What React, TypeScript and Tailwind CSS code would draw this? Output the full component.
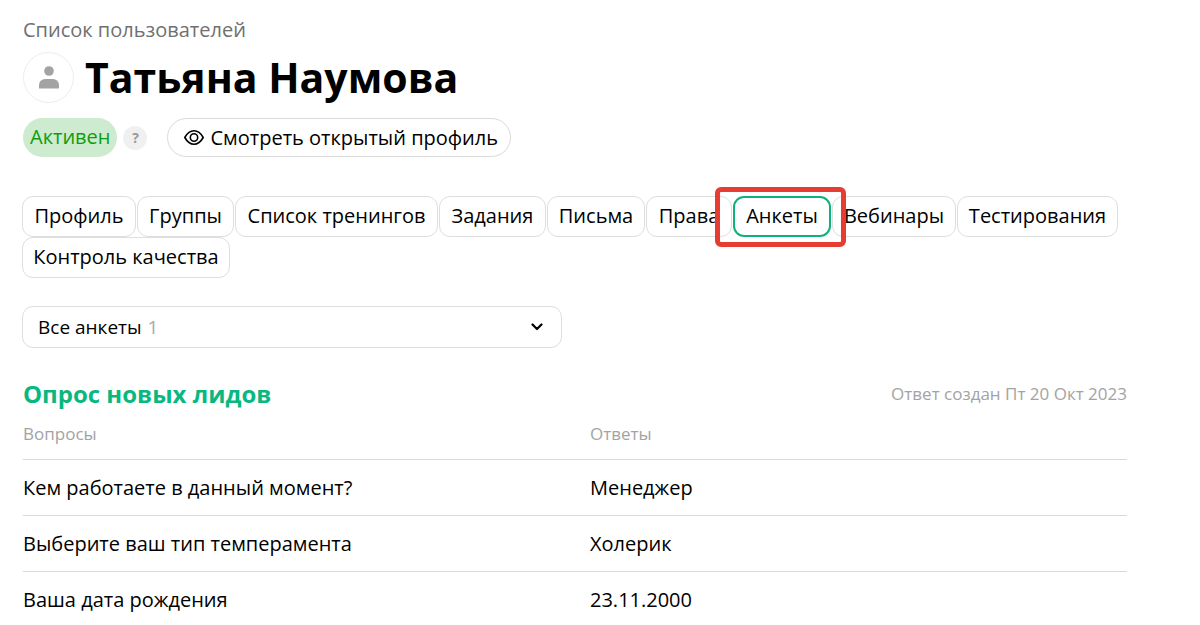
import { useState } from "react";
import clsx from "clsx";

const tabs = [
  { id: "profile", label: "Профиль", width: "min-w-[114px]" },
  { id: "groups", label: "Группы", width: "min-w-[97px]" },
  { id: "trainings", label: "Список тренингов", width: "min-w-[203px]" },
  { id: "tasks", label: "Задания", width: "min-w-[107px]" },
  { id: "letters", label: "Письма", width: "min-w-[98px]" },
  { id: "rights", label: "Права", width: "min-w-[86px]" },
  { id: "surveys", label: "Анкеты", width: "min-w-[98px]" },
  { id: "webinars", label: "Вебинары", width: "min-w-[124px]" },
  { id: "testing", label: "Тестирования", width: "min-w-[161px]" },
  { id: "quality", label: "Контроль качества", width: "min-w-[208px]" },
];

const answers = [
  { question: "Кем работаете в данный момент?", answer: "Менеджер" },
  { question: "Выберите ваш тип темперамента", answer: "Холерик" },
  { question: "Ваша дата рождения", answer: "23.11.2000" },
];

const UserIcon = () => (
  <svg viewBox="0 0 20 23" className="h-[23px] w-5" fill="#a3a3a3" aria-hidden="true">
    <circle cx="10" cy="5" r="4.8" />
    <path d="M0 22.500V19a6 6 0 0 1 6-6h8a6 6 0 0 1 6 6v3.500z" />
  </svg>
);

const EyeIcon = () => (
  <svg viewBox="0 0 20 15" className="mb-0.5 h-[15px] w-5" fill="none" stroke="#000" strokeWidth="1.6" aria-hidden="true">
    <path d="M.8 7.500C3.200 3.200 6.300 .8 10 .8s6.800 2.400 9.200 6.700c-2.400 4.300-5.500 6.700-9.200 6.700S3.200 11.800 .8 7.500z" strokeLinejoin="round" />
    <circle cx="10" cy="7.500" r="3.700" />
  </svg>
);

const ChevronIcon = () => (
  <svg viewBox="0 0 12 8" className="h-2 w-3" fill="none" stroke="#000" strokeWidth="2.2" strokeLinecap="round" strokeLinejoin="round" aria-hidden="true">
    <path d="M1.500 1.500 6 6l4.500-4.500" />
  </svg>
);

export default function App() {
  const [activeTab, setActiveTab] = useState("surveys");

  return (
    <main className="bg-white pb-3 pl-[23px] pr-[73px] pt-4 font-['Open_Sans','Noto_Sans',sans-serif] text-xl leading-7 text-black">
      <a href="#users" className="block text-[#707070]">Список пользователей</a>

      <header className="mt-2 flex items-center gap-[11px]">
        <span className="flex size-[51px] shrink-0 items-center justify-center rounded-full border border-[#ededed]">
          <UserIcon />
        </span>
        <h1 className="text-[41px] font-bold leading-[49px]">Татьяна Наумова</h1>
      </header>

      <div className="mt-[15px] flex items-center">
        <span className="rounded-full bg-[#cdebce] px-[7px] pb-1.5 pt-[5px] text-[#109c10]">Активен</span>
        <button type="button" aria-label="Справка" className="ml-1.5 size-6 rounded-full bg-[#f0f0f0] text-sm font-bold leading-6 text-[#999]">
          ?
        </button>
        <a href="#open-profile" className="ml-5 flex items-center gap-1.5 rounded-full border border-[#dadada] pb-1 pl-4 pr-3 pt-[5px]">
          <EyeIcon />
          Смотреть открытый профиль
        </a>
      </div>

      <nav aria-label="Разделы пользователя" className="-ml-px mt-[39px] flex flex-wrap gap-x-px">
        {tabs.map((tab) => (
          <div key={tab.id} className="relative">
            <button
              type="button"
              aria-current={activeTab === tab.id ? "page" : undefined}
              onClick={() => setActiveTab(tab.id)}
              className={clsx(
                "block h-[41px] rounded-[11px] pb-px text-center",
                tab.width,
                activeTab === tab.id ? "border-2 border-[#0eb27e]" : "border border-[#dedede]",
              )}
            >
              {tab.label}
            </button>
            {tab.id === "surveys" && (
              <span className="pointer-events-none absolute -bottom-2.5 -left-[18px] -right-[15px] -top-[9px] z-10 rounded-md border-5 border-[#e63c31]" />
            )}
          </div>
        ))}
      </nav>

      <label className="-ml-px mt-7 flex h-[42px] w-full max-w-[540px] items-center gap-1.5 rounded-[11px] border border-[#dedede] pl-[15px] pr-[18px] text-[19px]">
        <select aria-label="Анкеты" className="appearance-none bg-transparent outline-none [field-sizing:content]">
          <option>Все анкеты</option>
        </select>
        <span className="text-[#a8a8a8]">1</span>
        <span className="ml-auto">
          <ChevronIcon />
        </span>
      </label>

      <section className="mt-[31px]">
        <div className="flex items-center justify-between">
          <h2 className="text-2xl font-bold leading-[30px] text-[#08b880]">Опрос новых лидов</h2>
          <p className="text-[17px] text-[#a3a3a3]">Ответ создан Пт 20 Окт 2023</p>
        </div>

        <table className="w-full table-fixed text-left">
          <thead>
            <tr className="h-[50px] text-[17px] text-[#a3a3a3]">
              <th className="w-[567px] font-normal">Вопросы</th>
              <th className="font-normal">Ответы</th>
            </tr>
          </thead>
          <tbody>
            {answers.map((row) => (
              <tr key={row.question} className="h-14 border-t border-[#d9d9d9]">
                <td className="pt-0.5">{row.question}</td>
                <td className="pt-0.5">{row.answer}</td>
              </tr>
            ))}
          </tbody>
        </table>
      </section>
    </main>
  );
}
